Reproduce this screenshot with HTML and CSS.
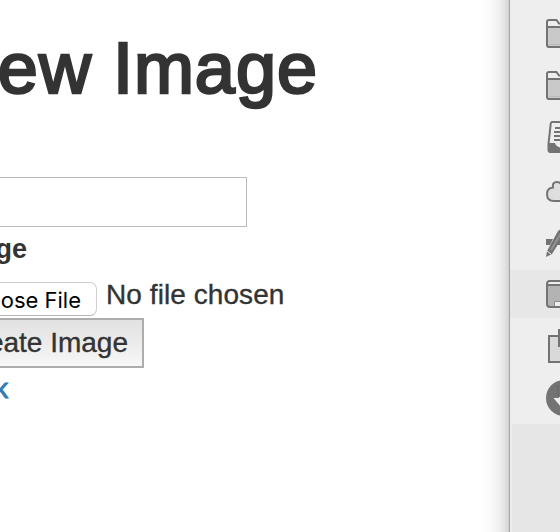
FILE: index.html
```html
<!DOCTYPE html>
<html lang="en">
<head>
<meta charset="utf-8">
<title>New Image</title>
<link rel="stylesheet" href="styles.css">
</head>
<body>
<div class="window">
  <main class="page">
    <h1 class="title">ew Image</h1>
    <form class="form">
      <div class="field"></div>
      <div class="label">ge</div>
      <div class="file"><span class="choose">oose File</span><span class="status">No file chosen</span></div>
      <div class="submit">eate Image</div>
      <a class="back">k</a>
    </form>
  </main>
  <aside class="sidebar">
    <div class="item"><svg viewBox="0 0 14 32"><path class="fill" d="M2 11H16V29H2Z"/><path d="M3 27.500H16" stroke="#bbb" stroke-width="1"/><path d="M16 6.500H13L10.500 3H3Q1 3 1 5V28Q1 30 3 30H16M1 10H16"/></svg></div>
    <div class="item"><svg viewBox="0 0 14 32"><path class="fill" d="M2 11H16V29H2Z"/><path d="M3 27.500H16" stroke="#bbb" stroke-width="1"/><path d="M16 6.500H13L10.500 3H3Q1 3 1 5V28Q1 30 3 30H16M1 10H16"/></svg></div>
    <div class="item"><svg viewBox="0 0 14 32"><path d="M16 1H6Q5 1 4.700 3L2.500 23V29Q2.500 31 5 31H16"/><path class="solid" d="M3 22H9Q10 26 16 27V32H5Q2 32 2 29Z"/><path d="M9 7H16M8 11H16M8 15H16M8 19H16"/></svg></div>
    <div class="item"><svg viewBox="0 0 14 32"><path d="M16 24H8Q1 24 1 17Q1 11 7 10.500Q6 5 11 5Q14 5 16 8" fill="#dedede"/></svg></div>
    <div class="item"><svg viewBox="0 0 14 32"><path class="solid" d="M0 14H7L4 20H0ZM12 17L16 12V20H10Z"/><path class="solid" d="M0 32L1 26L12 6L16 3V13L6 29Z"/><path d="M5 25L15 8" stroke="#929292"/><path d="M1 26L5 29" stroke="#eee" stroke-width="1"/></svg></div>
    <div class="item selected"><svg viewBox="0 0 14 32"><path d="M1 8V6Q1 3 4 3H16V8Z" fill="#eee" stroke="none"/><path d="M1 8H16V29H4Q1 29 1 26Z" fill="#b3b3b3" stroke="none"/><path d="M16 3H4Q1 3 1 6V26Q1 29 4 29H16M1 7H16"/><path d="M9 28V24H16V28Z" fill="#eee" stroke="none"/><path d="M8.500 28V23.500H16" stroke="#8a8a8a" stroke-width="1"/></svg></div>
    <div class="item"><svg viewBox="0 0 14 32"><path d="M16 2H3V28H16" fill="#d9d9d9"/><path class="solid" d="M12-5H16V13H12Z"/></svg></div>
    <div class="item"><svg viewBox="0 0 14 32"><circle class="solid" cx="18" cy="14" r="18"/><path d="M7.500 14H13V13H16V24Z" fill="#eee" stroke="none"/><path d="M12 1V12" stroke="#666" stroke-width="1"/></svg></div>
    <div class="rest"></div>
  </aside>
</div>
</body>
</html>
```
FILE: styles.css
```css
* { box-sizing: border-box; }
body { margin: 0; overflow: hidden; background: #fff; font-family: "Liberation Sans", Arial, sans-serif; color: #333; }
.window { display: flex; width: 560px; height: 532px; overflow: hidden; }
.page {
  width: 509px;
  overflow: hidden;
  background: linear-gradient(to right, #fff 480px, #fafafa 490px, #f0f0f0 499px, #e2e2e2 505px, #d2d2d2 509px);
}
.title {
  display: flex; justify-content: flex-end;
  width: 318px; height: 177px; margin: 0; padding-top: 28px;
  font-size: 72px; line-height: 80px; font-weight: 400; white-space: pre; letter-spacing: 1px;
  -webkit-text-stroke: 2.6px #333;
}
.form { display: flex; flex-direction: column; align-items: flex-start; }
.field { width: 247px; height: 50px; border: 1px solid #bbb; border-left: 0; background: #fff; }
.label { display: flex; justify-content: flex-end; width: 27px; height: 55px; padding-top: 6px; font-size: 27px; line-height: 32px; font-weight: 700; }
.file { display: flex; align-items: flex-start; height: 36px; }
.choose {
  display: flex; justify-content: flex-end;
  width: 97px; height: 34px; padding-right: 15px;
  border: 1px solid #cfcfcf; border-bottom-color: #b5b5b5; border-left: 0; border-radius: 0 7px 7px 0;
  background: #fff; color: #000; font: 22px/34px Inter, sans-serif; white-space: nowrap;
}
.status { margin: -3px 0 0 9px; font-size: 28px; line-height: 32px; white-space: nowrap; letter-spacing: .07px; -webkit-text-stroke: .35px #333; }
.submit {
  display: flex; justify-content: flex-end;
  width: 144px; height: 50px; padding: 7px 14px 0 0;
  border: 2px solid #adadad; border-left: 0;
  background: linear-gradient(#e1e1e1, #f7f7f7);
  font-size: 28px; line-height: 32px; white-space: nowrap; -webkit-text-stroke: .35px #333;
}
.back { display: flex; justify-content: flex-end; width: 8px; margin-top: 5px; font-size: 27px; line-height: 32px; color: #337ab7; -webkit-text-stroke: 1px #337ab7; }
.sidebar { display: flex; flex-direction: column; width: 51px; padding-top: 10px; border-left: 1px solid #a3a3a3; background: #eee; }
.item { flex: none; height: 52px; padding: 7px 0 0 36px; }
.item svg { display: block; width: 14px; height: 32px; overflow: visible; fill: none; stroke: #737373; stroke-width: 2; }
.item svg .solid { fill: #737373; stroke: none; }
.item svg .fill { fill: #c9c9c9; stroke: none; }
.item:nth-child(4) { padding-top: 11px; }
.item:nth-child(5) { padding-top: 7px; }
.item.selected { height: 48px; padding-top: 8px; background: #e7e7e7; }
.item:nth-child(7) { padding-top: 16px; }
.item:nth-child(8) { padding-top: 14px; }
.rest { flex: 1; margin: 2px 0 0 2px; background: #e6e6e6; }
```
